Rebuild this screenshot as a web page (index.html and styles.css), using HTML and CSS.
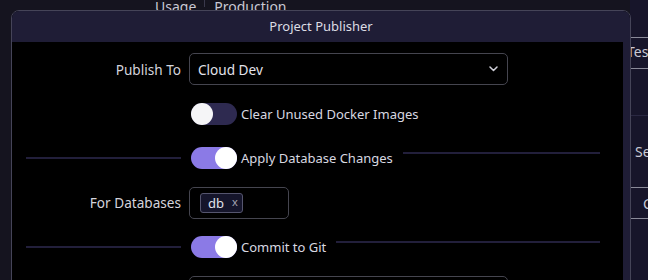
FILE: index.html
```html
<!DOCTYPE html>
<html>
<head>
<meta charset="utf-8">
<link rel="stylesheet" href="styles.css">
</head>
<body>
<div class="page">
  <div class="main">
    <div class="bg-head">
      <span class="bg-cell">Usage</span>
      <span class="bg-cell bg-cell-sep">Production</span>
    </div>
  </div>
  <div class="side">
    <div class="side-row r1"></div>
    <div class="side-row r2"><span class="t-test">Test</span></div>
    <div class="side-row r3"></div>
    <div class="side-row r4"><span class="t-se">Se</span></div>
    <div class="side-row r5"><span class="t-c">C</span></div>
    <div class="side-row r6"></div>
  </div>
</div>

<div class="modal">
  <div class="modal-header">Project Publisher</div>
  <div class="modal-body">
    <div class="form">
      <div class="row">
        <div class="lbl">Publish To</div>
        <div class="ctrl">
          <div class="select">
            <span class="select-text">Cloud Dev</span>
            <svg class="chev" width="9" height="6" viewBox="0 0 9 6"><path d="M1 1 L4.5 4.5 L8 1" fill="none" stroke="#cfcfd8" stroke-width="1.5" stroke-linecap="round" stroke-linejoin="round"/></svg>
          </div>
        </div>
      </div>
      <div class="row">
        <div class="lbl"></div>
        <div class="ctrl">
          <span class="toggle"><span class="knob"></span></span>
          <span class="tlabel">Clear Unused Docker Images</span>
        </div>
      </div>
      <div class="row">
        <div class="lbl"><span class="rule rule-left"></span></div>
        <div class="ctrl">
          <span class="toggle on"><span class="knob"></span></span>
          <span class="tlabel">Apply Database Changes</span>
          <span class="rule rule-right"></span>
        </div>
      </div>
      <div class="row">
        <div class="lbl">For Databases</div>
        <div class="ctrl">
          <div class="tags">
            <span class="chip"><span class="chip-text">db</span><span class="chip-x">x</span></span>
          </div>
        </div>
      </div>
      <div class="row">
        <div class="lbl"><span class="rule rule-left"></span></div>
        <div class="ctrl">
          <span class="toggle on"><span class="knob"></span></span>
          <span class="tlabel">Commit to Git</span>
          <span class="rule rule-right"></span>
        </div>
      </div>
      <div class="row">
        <div class="lbl"></div>
        <div class="ctrl">
          <div class="select"></div>
        </div>
      </div>
    </div>
    <div class="scroll"></div>
  </div>
</div>
</body>
</html>
```

FILE: styles.css
```css
html, body {
  margin: 0;
  padding: 0;
}
body {
  width: 648px;
  height: 280px;
  overflow: hidden;
  background: #15141f;
  font-family: "Noto Sans", "Open Sans", sans-serif;
  color: #d6d6de;
  position: relative;
}
.page {
  display: grid;
  grid-template-columns: 630px 1fr;
  height: 280px;
}
.bg-head {
  display: flex;
  padding-left: 155px;
  height: 10px;
  margin-top: -3px;
}
.bg-cell {
  font-size: 14px;
  line-height: 20px;
  color: #c9c9d4;
  padding-right: 8px;
}
.bg-cell-sep {
  border-left: 1px solid #3a394c;
  padding-left: 9px;
}
.side {
  background: #17152a;
  display: flex;
  flex-direction: column;
}
.side-row {
  font-size: 14px;
  color: #c9c9d4;
  display: flex;
  align-items: center;
  overflow: hidden;
  white-space: nowrap;
}
.r1 { height: 37px; border-bottom: 1px solid #8a8a98; }
.r2 { height: 30px; border-bottom: 1px solid #8a8a98; }
.r3 { height: 46px; border-bottom: 1px solid #2a2842; }
.r4 { height: 71px; border-bottom: 1px solid #8a8a98; }
.r5 { height: 30px; border-bottom: 1px solid #8a8a98; }
.r6 { flex: 1; }
.t-test { margin-left: -3px; margin-top: -3px; }
.t-se { margin-left: 5px; }
.t-c { margin-left: 13px; }

.modal {
  position: absolute;
  left: 11px;
  top: 10px;
  width: 620px;
  height: 300px;
  box-sizing: border-box;
  border: 1px solid #454458;
  border-radius: 8px 8px 0 0;
  overflow: hidden;
  background: #000;
  display: flex;
  flex-direction: column;
}
.modal-header {
  height: 31px;
  flex: none;
  background: #1f1d36;
  text-align: center;
  font-size: 13px;
  line-height: 31px;
  color: #dcdce4;
}
.modal-body {
  flex: 1;
  display: flex;
}
.form {
  flex: 1;
  padding-top: 5px;
}
.scroll {
  width: 7px;
  background: #1f1d36;
}
.row {
  display: grid;
  grid-template-columns: 169px 1fr;
  column-gap: 8px;
  height: 44.5px;
  align-items: center;
}
.lbl {
  text-align: right;
  font-size: 13.6px;
  color: #d4d4dc;
  display: flex;
  justify-content: flex-end;
  align-items: center;
}
.ctrl {
  display: flex;
  align-items: center;
}
.select {
  width: 319px;
  height: 32px;
  box-sizing: border-box;
  border: 1px solid #45454f;
  border-radius: 5px;
  display: flex;
  align-items: center;
  justify-content: space-between;
  padding: 0 9px 0 8px;
}
.select-text {
  font-size: 13.6px;
  color: #e2e2ea;
}
.chev {
  display: block;
}
.toggle {
  width: 46px;
  height: 22px;
  border-radius: 11px;
  background: #2e2a50;
  margin-left: 2px;
  display: flex;
  justify-content: flex-start;
  flex: none;
}
.toggle.on {
  background: #8b7ae6;
  justify-content: flex-end;
}
.knob {
  width: 22px;
  height: 22px;
  border-radius: 50%;
  background: #f5f5f7;
}
.toggle.on .knob {
  background: #ffffff;
}
.tlabel {
  margin-left: 4px;
  font-size: 13px;
  color: #d8d8e0;
  white-space: nowrap;
}
.rule {
  display: block;
  height: 2px;
  background: #221f3b;
}
.rule-left {
  flex: 1;
  margin-left: 14px;
}
.rule-right {
  flex: 1;
  margin-left: 10px;
  margin-right: 23px;
  margin-bottom: 10px;
}
.tags {
  width: 100px;
  height: 32px;
  box-sizing: border-box;
  border: 1px solid #45454f;
  border-radius: 5px;
  display: flex;
  align-items: center;
  padding-left: 10px;
}
.chip {
  height: 20px;
  box-sizing: border-box;
  border: 1px solid #55556e;
  background: #15152b;
  border-radius: 3px;
  display: flex;
  align-items: center;
  padding: 0 4px 0 7px;
  gap: 8px;
}
.chip-text {
  font-size: 13px;
  color: #e2e2ea;
}
.chip-x {
  font-size: 11px;
  color: #a4a4b4;
  margin-top: -2px;
}
```
